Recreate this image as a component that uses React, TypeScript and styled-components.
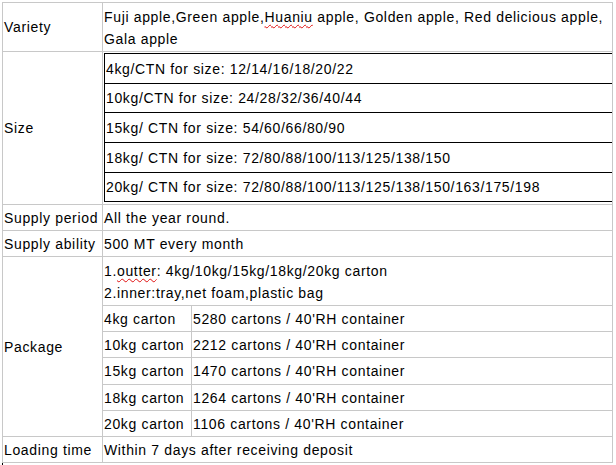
import React from "react";
import styled, { createGlobalStyle } from "styled-components";

const Global = createGlobalStyle`
  html, body { margin: 0; padding: 0; background: #fff; }
  body { font-family: "Liberation Sans", Arial, sans-serif; color: #000; }
`;

const Page = styled.div`
  width: 616px;
  height: 465px;
  box-sizing: border-box;
  padding: 2px 0 0 2px;
  overflow: hidden;
`;

const Sheet = styled.table`
  border-collapse: collapse;
  table-layout: fixed;
  width: 611px;
  font-size: 14px;
  letter-spacing: 0.65px;
`;

const Row = styled.tr<{ $h: number }>`
  height: ${(p) => p.$h}px;
`;

const Cell = styled.td`
  border: 1px solid #c8c8c8;
  padding: 0 0 0 1px;
  vertical-align: middle;
  white-space: nowrap;
  line-height: 16px;
`;

const MultiCell = styled(Cell)`
  line-height: 22px;
  padding: 2px 0 0 1px;
`;

const NestCell = styled(Cell)`
  padding: 1px 0 2px 1px;
`;

const Inner = styled.table`
  border-collapse: collapse;
  width: 509px;
  font-size: 14px;
  letter-spacing: 0.65px;
`;

const InnerCell = styled.td`
  border: 1px solid #000;
  padding: 0 0 0 1px;
  vertical-align: middle;
  white-space: nowrap;
  line-height: 16px;
`;

const Typo = styled.span`
  text-decoration: underline wavy #e01010;
  text-decoration-thickness: 1px;
  text-underline-offset: 2px;
`;

const Caret = styled.div`
  width: 1px;
  height: 3px;
  background: #000;
`;

const sizes = [
  { t: "4kg/CTN for size: 12/14/16/18/20/22", h: 30 },
  { t: "10kg/CTN for size: 24/28/32/36/40/44", h: 29 },
  { t: "15kg/ CTN for size: 54/60/66/80/90", h: 30 },
  { t: "18kg/ CTN for size: 72/80/88/100/113/125/138/150", h: 30 },
  { t: "20kg/ CTN for size: 72/80/88/100/113/125/138/150/163/175/198", h: 29 },
];

const cartons = [
  { k: "4kg carton", v: "5280 cartons / 40'RH container", h: 26 },
  { k: "10kg carton", v: "2212 cartons / 40'RH container", h: 26 },
  { k: "15kg carton", v: "1470 cartons / 40'RH container", h: 27 },
  { k: "18kg carton", v: "1264 cartons / 40'RH container", h: 26 },
  { k: "20kg carton", v: "1106 cartons / 40'RH container", h: 26 },
];

export default function App() {
  return (
    <Page>
      <Global />
      <Sheet>
        <colgroup>
          <col style={{ width: 100 }} />
          <col style={{ width: 89 }} />
          <col />
        </colgroup>
        <tbody>
          <Row $h={49}>
            <Cell>Variety</Cell>
            <MultiCell colSpan={2}>
              Fuji apple,Green apple,<Typo>Huaniu</Typo> apple, Golden apple, Red delicious apple,
              <br />
              Gala apple
            </MultiCell>
          </Row>
          <Row $h={153}>
            <Cell>Size</Cell>
            <NestCell colSpan={2}>
              <Inner>
                <tbody>
                  {sizes.map((s) => (
                    <Row key={s.t} $h={s.h}>
                      <InnerCell>{s.t}</InnerCell>
                    </Row>
                  ))}
                </tbody>
              </Inner>
            </NestCell>
          </Row>
          <Row $h={26}>
            <Cell>Supply period</Cell>
            <Cell colSpan={2}>All the year round.</Cell>
          </Row>
          <Row $h={26}>
            <Cell>Supply ability</Cell>
            <Cell colSpan={2}>500 MT every month</Cell>
          </Row>
          <Row $h={49}>
            <Cell rowSpan={6}>Package</Cell>
            <MultiCell colSpan={2}>
              1.<Typo>outter</Typo>: 4kg/10kg/15kg/18kg/20kg carton
              <br />
              2.inner:tray,net foam,plastic bag
            </MultiCell>
          </Row>
          {cartons.map((c) => (
            <Row key={c.k} $h={c.h}>
              <Cell>{c.k}</Cell>
              <Cell>{c.v}</Cell>
            </Row>
          ))}
          <Row $h={26}>
            <Cell>Loading time</Cell>
            <Cell colSpan={2}>Within 7 days after receiving deposit</Cell>
          </Row>
        </tbody>
      </Sheet>
      <Caret />
    </Page>
  );
}
